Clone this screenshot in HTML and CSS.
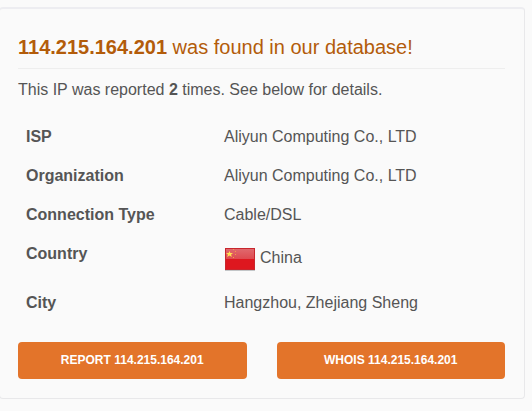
FILE: index.html
```html
<!DOCTYPE html>
<html lang="en">
	<head>
		<meta charset="utf-8">
		<title>114.215.164.201</title>
		<link rel="stylesheet" href="styles.css">
	</head>
	<body>
		<div class="well">
			<h3><b>114.215.164.201</b> was found in our database!</h3>
			<p>This IP was reported <b>2</b> times. See below for details.</p>
			<table class="table">
				<tr>
					<th scope="row">ISP</th>
					<td>Aliyun Computing Co., LTD</td>
				</tr>
				<tr>
					<th scope="row">Organization</th>
					<td>Aliyun Computing Co., LTD</td>
				</tr>
				<tr>
					<th scope="row">Connection Type</th>
					<td>Cable/DSL</td>
				</tr>
				<tr>
					<th scope="row">Country</th>
					<td>
						<div class="country">
							<svg class="flag" width="32" height="32" viewBox="0 0 32 32" aria-hidden="true">
								<defs>
									<linearGradient id="shine" x1="0" y1="0" x2="0" y2="1">
										<stop offset="0" stop-color="#e0686d"/>
										<stop offset="1" stop-color="#de4a50"/>
									</linearGradient>
								</defs>
								<rect x="1" y="7" width="30" height="22" fill="#c3c6c8"/>
								<rect x="1" y="6" width="30" height="22" fill="#c8262d"/>
								<rect x="2" y="7" width="28" height="20" fill="#de171f"/>
								<rect x="2" y="7" width="28" height="10" fill="url(#shine)"/>
								<path fill="#ffe052" d="M5.500 9l.9 2.100H9L7.100 12.600 7.800 15l-2.300-1.400L3.200 15l.7-2.400L2 11.100h2.600z"/>
								<path fill="#efa04a" d="M9 7h1v1H9zM11 9h1v1h-1zM11 12h1v1h-1zM9 15h1v1H9z"/>
							</svg>
							<span>China</span>
						</div>
					</td>
				</tr>
				<tr>
					<th scope="row">City</th>
					<td>Hangzhou, Zhejiang Sheng</td>
				</tr>
			</table>
			<div class="buttons">
				<button type="button" class="btn">Report 114.215.164.201</button>
				<button type="button" class="btn">Whois 114.215.164.201</button>
			</div>
		</div>
	</body>
</html>
```

FILE: styles.css
```css
* {
	box-sizing: border-box;
}

body {
	margin: 7px 7px 12px -1px;
	background-color: #fafafa;
	color: #555;
	font-family: "Liberation Sans", Arial, sans-serif;
	font-size: 16px;
	line-height: 23px;
}

.well {
	padding: 26px 19px 19px 18px;
	border: 1px solid #e8e8ea;
	border-top: 2px solid #ededf1;
	border-radius: 4px;
}

h3 {
	margin: 0 0 9px;
	padding-bottom: 9px;
	border-bottom: 1px solid #eee;
	color: #b35c0a;
	font-size: 20px;
	font-weight: normal;
	line-height: 24px;
}

p {
	margin: 0 0 16px;
}

.table {
	width: 100%;
	margin-bottom: 20px;
	border-collapse: collapse;
	table-layout: fixed;
}

.table th,
.table td {
	padding: 8px;
	text-align: left;
	vertical-align: top;
}

.table th {
	width: 198px;
}

.country {
	display: flex;
	align-items: flex-start;
	gap: 4px;
	height: 33px;
	line-height: 31px;
}

.buttons {
	display: grid;
	grid-template-columns: 1fr 1fr;
	gap: 30px;
}

.btn {
	padding: 10px 12px;
	border: 0;
	border-radius: 4px;
	background-color: #e3742a;
	color: #fff;
	font-family: inherit;
	font-size: 12px;
	font-weight: bold;
	line-height: 17px;
	text-transform: uppercase;
	cursor: pointer;
}
```
